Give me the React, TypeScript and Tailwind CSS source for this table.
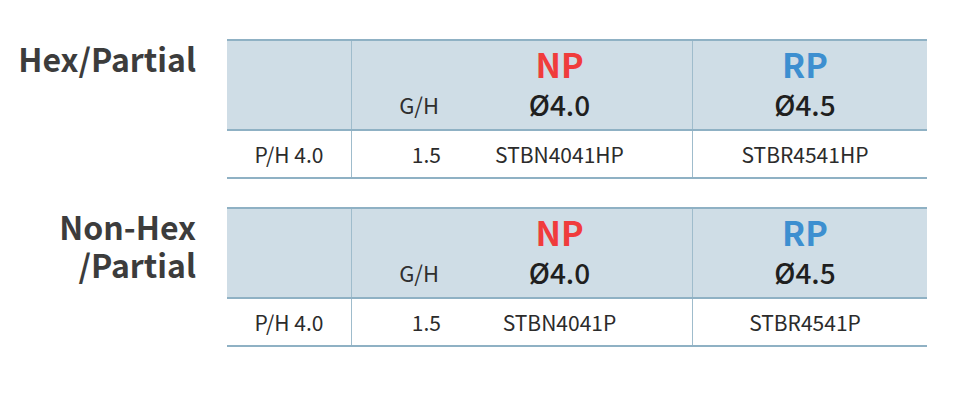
const font = { fontFamily: '"Noto Sans CJK KR", "Noto Sans", sans-serif' };

interface SpecTableProps {
  title: string[];
  np: string;
  rp: string;
}

function SpecTable({ title, np, rp }: SpecTableProps) {
  return (
    <div className="flex">
      {/* Title */}
      <div className="w-[196px] text-right text-[32px] leading-[38px] font-bold text-[#3c3c3c]">
        {title.map((t) => (
          <div key={t}>{t}</div>
        ))}
      </div>

      {/* Table */}
      <div className="ml-[31px] w-[700px] border-y-2 border-[#8fb1c4]">
        {/* Header */}
        <div className="flex h-[88px] bg-[#cfdde6]">
          <div className="w-[124px]" />
          <div className="flex w-[341px] border-l border-[#9fbccc]">
            <div className="w-[89px] pr-[2px] pb-[12px] flex items-end justify-end text-[22px] leading-[26px] text-[#2f2f2f]">
              G/H
            </div>
            <div className="flex-1 pr-[14px] pb-[9px] flex flex-col items-center justify-end">
              <div className="text-[34px] leading-[38px] font-bold text-[#f03c3c]">NP</div>
              <div className="mt-[5px] text-[28px] leading-[32px] font-medium text-[#1f1f1f]">Ø4.0</div>
            </div>
          </div>
          <div className="flex-1 border-l border-[#9fbccc] pr-[10px] pb-[9px] flex flex-col items-center justify-end">
            <div className="text-[34px] leading-[38px] font-bold text-[#3d8fd0]">RP</div>
            <div className="mt-[5px] text-[28px] leading-[32px] font-medium text-[#1f1f1f]">Ø4.5</div>
          </div>
        </div>

        {/* Body */}
        <div className="flex h-[48px] border-t-2 border-[#8fb1c4] text-[21px] leading-[46px] text-[#2b2b2b]">
          <div className="w-[124px] text-center">P/H 4.0</div>
          <div className="flex w-[341px] border-l border-[#9fbccc]">
            <div className="w-[89px] text-right">1.5</div>
            <div className="flex-1 pr-[14px] text-center">{np}</div>
          </div>
          <div className="flex-1 border-l border-[#9fbccc] pr-[10px] text-center">{rp}</div>
        </div>
      </div>
    </div>
  );
}

export default function App() {
  return (
    <div className="w-[967px] h-[405px] bg-white pt-[39px]" style={font}>
      <SpecTable title={["Hex/Partial"]} np="STBN4041HP" rp="STBR4541HP" />
      <div className="h-[28px]" />
      <SpecTable title={["Non-Hex", "/Partial"]} np="STBN4041P" rp="STBR4541P" />
    </div>
  );
}
